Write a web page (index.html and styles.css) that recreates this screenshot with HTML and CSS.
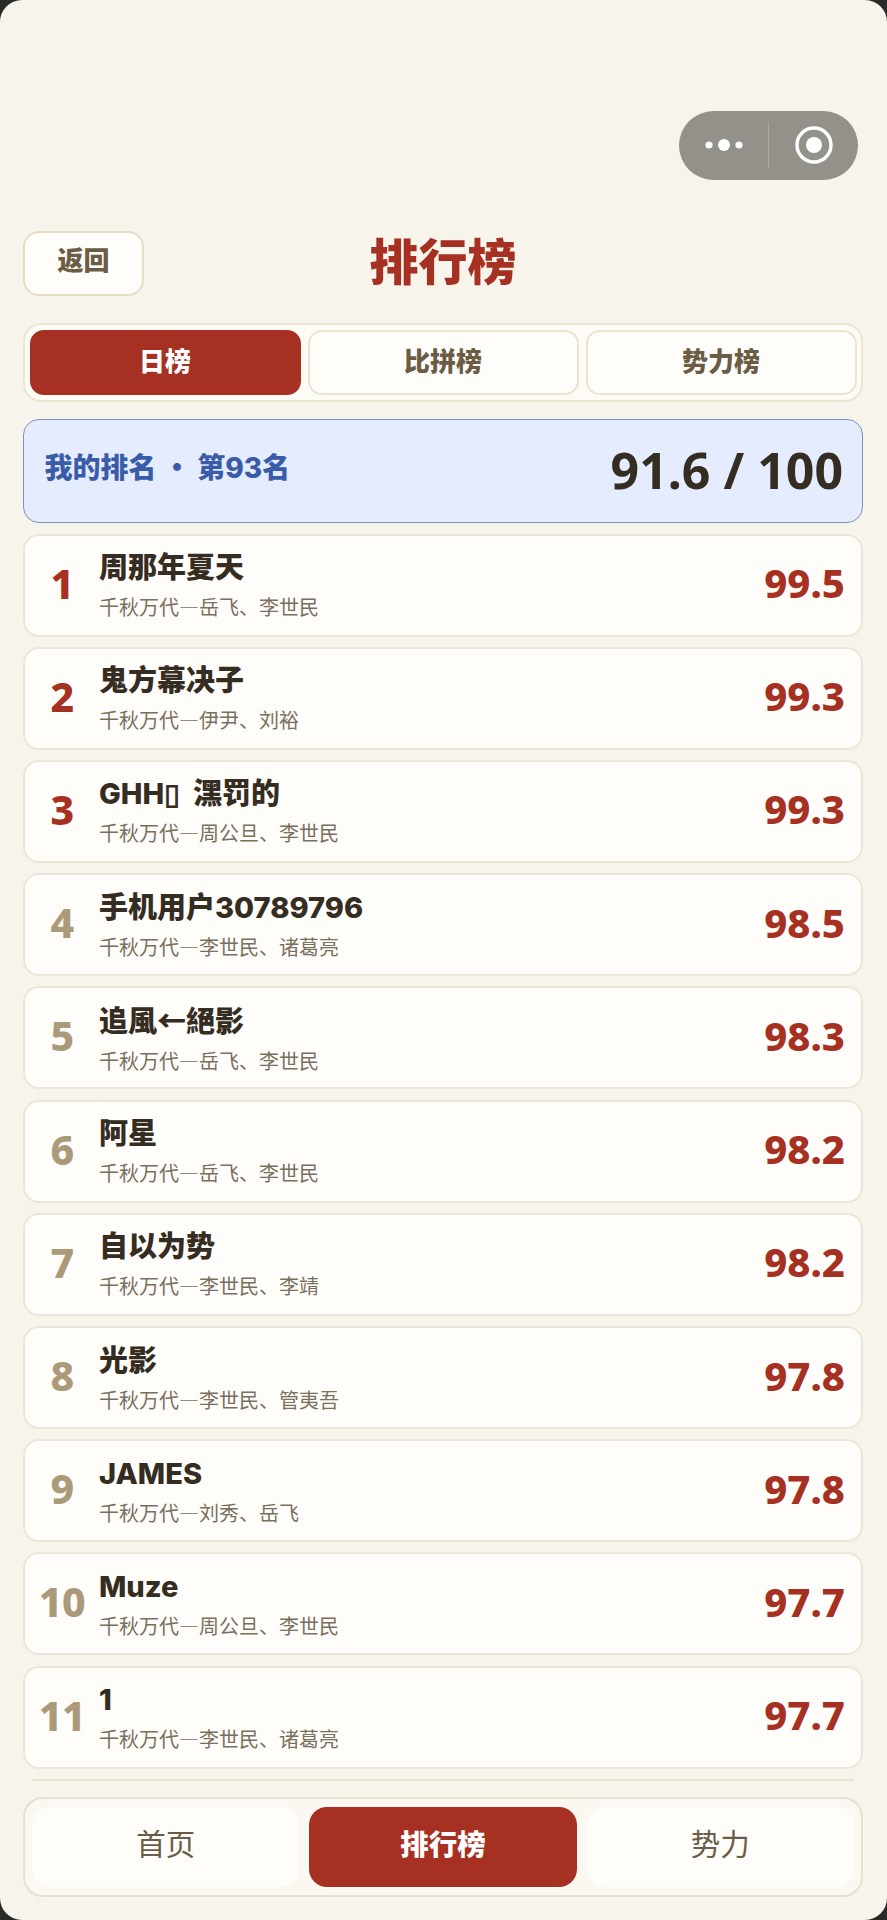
FILE: index.html
```html
<!DOCTYPE html>
<html lang="zh">
<head>
<meta charset="utf-8">
<title>排行榜</title>
<link rel="stylesheet" href="styles.css">
</head>
<body>
<div class="page">
  <div class="capsule-row">
    <div class="capsule">
      <div class="capsule-side">
        <svg width="42" height="14" viewBox="0 0 42 14"><circle cx="6" cy="7" r="3.6" fill="#fff"/><circle cx="21" cy="7" r="6" fill="#fff"/><circle cx="36" cy="7" r="3.6" fill="#fff"/></svg>
      </div>
      <div class="capsule-line"></div>
      <div class="capsule-side">
        <svg width="38" height="38" viewBox="0 0 38 38"><circle cx="19" cy="19" r="17" fill="none" stroke="#fff" stroke-width="3.4"/><circle cx="19" cy="19" r="8" fill="#fff"/></svg>
      </div>
    </div>
  </div>
  <header class="header">
    <div class="back">返回</div>
    <h1 class="title">排行榜</h1>
  </header>
  <div class="tabs">
    <div class="tab tab-on">日榜</div>
    <div class="tab">比拼榜</div>
    <div class="tab">势力榜</div>
  </div>
  <div class="mine">
    <div class="mine-label">我的排名 · 第<span class="num">93</span>名</div>
    <div class="mine-score">91.6 / 100</div>
  </div>
  <div class="list">
    <div class="row"><div class="rank rank-top">1</div><div class="info"><div class="name">周那年夏天</div><div class="sub">千秋万代—岳飞、李世民</div></div><div class="score">99.5</div></div>
    <div class="row"><div class="rank rank-top">2</div><div class="info"><div class="name">鬼方幕决子</div><div class="sub">千秋万代—伊尹、刘裕</div></div><div class="score">99.3</div></div>
    <div class="row"><div class="rank rank-top">3</div><div class="info"><div class="name">GHH▯ &nbsp;潶罚的</div><div class="sub">千秋万代—周公旦、李世民</div></div><div class="score">99.3</div></div>
    <div class="row"><div class="rank">4</div><div class="info"><div class="name">手机用户30789796</div><div class="sub">千秋万代—李世民、诸葛亮</div></div><div class="score">98.5</div></div>
    <div class="row"><div class="rank">5</div><div class="info"><div class="name">追風<span class="cjk">←</span>絕影</div><div class="sub">千秋万代—岳飞、李世民</div></div><div class="score">98.3</div></div>
    <div class="row"><div class="rank">6</div><div class="info"><div class="name">阿星</div><div class="sub">千秋万代—岳飞、李世民</div></div><div class="score">98.2</div></div>
    <div class="row"><div class="rank">7</div><div class="info"><div class="name">自以为势</div><div class="sub">千秋万代—李世民、李靖</div></div><div class="score">98.2</div></div>
    <div class="row"><div class="rank">8</div><div class="info"><div class="name">光影</div><div class="sub">千秋万代—李世民、管夷吾</div></div><div class="score">97.8</div></div>
    <div class="row"><div class="rank">9</div><div class="info"><div class="name">JAMES</div><div class="sub">千秋万代—刘秀、岳飞</div></div><div class="score">97.8</div></div>
    <div class="row"><div class="rank">10</div><div class="info"><div class="name">Muze</div><div class="sub">千秋万代—周公旦、李世民</div></div><div class="score">97.7</div></div>
    <div class="row"><div class="rank">11</div><div class="info"><div class="name">1</div><div class="sub">千秋万代—李世民、诸葛亮</div></div><div class="score">97.7</div></div>
  </div>
  <div class="divider"></div>
  <nav class="nav">
    <div class="nav-item">首页</div>
    <div class="nav-item nav-on">排行榜</div>
    <div class="nav-item">势力</div>
  </nav>
</div>
</body>
</html>
```
FILE: styles.css
```css
* { box-sizing: border-box; }
html, body { margin: 0; padding: 0; background: #2a2a28; }
body {
  width: 887px;
  height: 1920px;
  overflow: hidden;
  font-family: "Inter", "Noto Sans CJK SC", sans-serif;
  color: #352c22;
}
.page {
  width: 887px;
  height: 1920px;
  background: #f7f4ec;
  border-radius: 22px;
  padding: 110.5px 24px 0 23px;
  overflow: hidden;
}
.capsule-row { display: flex; justify-content: flex-end; padding-right: 5px; height: 120.5px; }
.capsule {
  width: 179px;
  height: 69.5px;
  border-radius: 35px;
  background: #94918b;
  display: flex;
  align-items: center;
}
.capsule-side { flex: 1; display: flex; align-items: center; justify-content: center; }
.capsule-line { width: 1px; height: 46px; background: #aba8a2; }
.header { position: relative; display: flex; align-items: center; height: 65px; }
.back {
  width: 121px;
  height: 65px;
  border: 2px solid #e8dcc4;
  border-radius: 16px;
  background: #fffdf9;
  color: #6b5c45;
  font-family: "Noto Sans CJK SC", sans-serif;
  font-size: 26px;
  font-weight: 900;
  padding-bottom: 11px;
  display: flex;
  align-items: center;
  justify-content: center;
}
.title {
  position: absolute;
  left: 0;
  right: 0;
  margin: 0;
  padding-bottom: 11px;
  text-align: center;
  color: #a63022;
  font-family: "Noto Sans CJK SC", sans-serif;
  font-size: 49px;
  font-weight: 900;
  line-height: 65px;
}
.tabs {
  margin-top: 27px;
  height: 79px;
  border: 2px solid #eee5d3;
  border-radius: 18px;
  background: #fdfbf6;
  padding: 5px 4.5px;
  display: grid;
  grid-template-columns: repeat(3, 1fr);
  gap: 7px;
}
.tab {
  border: 2px solid #ece3d1;
  border-radius: 14px;
  background: #fffdf9;
  color: #6b5c45;
  font-family: "Noto Sans CJK SC", sans-serif;
  font-size: 26px;
  font-weight: 900;
  padding-bottom: 7px;
  display: flex;
  align-items: center;
  justify-content: center;
}
.tab-on { background: #a63022; border-color: #a63022; color: #fff; }
.mine {
  margin-top: 17px;
  height: 104px;
  border: 1.5px solid #7b93c0;
  border-radius: 16px;
  background: #e4ecfd;
  padding: 0 19px 0 20.5px;
  display: flex;
  align-items: center;
  justify-content: space-between;
}
.mine-label { color: #3a5ca8; font-family: "Noto Sans CJK SC", sans-serif; font-size: 28px; font-weight: 900; padding-bottom: 10px; }
.num { font-family: "Inter", sans-serif; font-weight: 800; }
.mine-score { font-family: "Noto Sans", sans-serif; font-size: 50px; font-weight: 700; padding-bottom: 3px; }
.list { margin-top: 10.5px; display: flex; flex-direction: column; gap: 10.22px; }
.row {
  height: 103px;
  border: 2px solid #ece6d8;
  border-radius: 16px;
  background: #fffdf9;
  display: flex;
  align-items: center;
  padding-right: 16px;
}
.rank {
  width: 74px;
  flex: none;
  text-align: center;
  font-family: "Noto Sans", sans-serif;
  font-size: 41px;
  font-weight: 800;
  letter-spacing: -0.5px;
  padding-bottom: 5px;
  color: #ab9a7a;
}
.rank-top { color: #a63022; }
.info { flex: 1; }
.name { font-size: 29px; font-weight: 800; line-height: 40px; }
.cjk { font-family: "Noto Sans CJK SC", sans-serif; font-weight: 900; }
.sub { font-family: "Noto Sans CJK SC", sans-serif; font-size: 20px; line-height: 30px; color: #7a6f5e; margin-top: 4px; }
.score { font-family: "Noto Sans", sans-serif; font-size: 40px; font-weight: 800; padding-bottom: 5px; color: #a63022; }
.divider { margin: 10.5px 9px 0; height: 2px; background: #e9e2d2; }
.nav {
  margin-top: 15.5px;
  height: 100px;
  border: 2px solid #e8e0ce;
  border-radius: 20px;
  background: #fbf8f1;
  padding: 8px 7px;
  display: grid;
  grid-template-columns: repeat(3, 1fr);
  gap: 10px;
}
.nav-item {
  border-radius: 18px;
  background: #fffdf9;
  color: #6b5c45;
  font-family: "Noto Sans CJK SC", sans-serif;
  font-size: 29.5px;
  padding-bottom: 9px;
  display: flex;
  align-items: center;
  justify-content: center;
}
.nav-on { background: #a63022; color: #fff; font-weight: 900; font-size: 28.5px; }
```
